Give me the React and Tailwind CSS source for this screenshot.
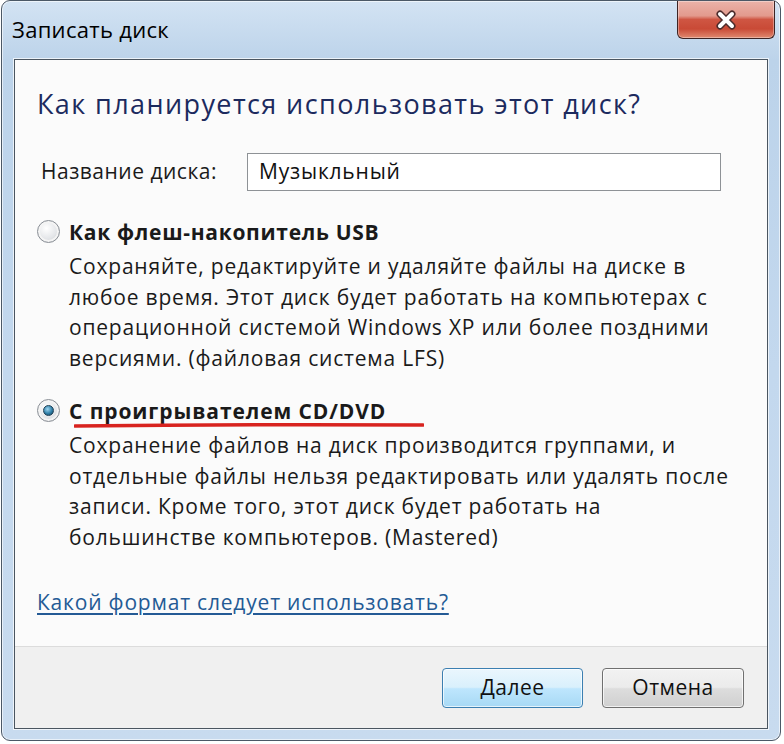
import React from "react";

const font = { fontFamily: '"Open Sans", "Noto Sans", sans-serif' };

function Radio({ checked }) {
  return (
    <span className="relative mt-[3px] flex h-[23px] w-[23px] shrink-0 items-center justify-center rounded-full border border-[#8a8f96] bg-[radial-gradient(circle_at_40%_35%,#ffffff,#e4e6e9_55%,#c4c7cc)] shadow-[inset_0_0_0_2px_#f4f4f4]">
      {checked && (
        <span className="h-[11px] w-[11px] rounded-full border border-[#1e3f55] bg-[radial-gradient(circle_at_40%_35%,#9fd6f0,#2f7fa8_55%,#123a52)]" />
      )}
    </span>
  );
}

function CloseButton() {
  return (
    <div className="absolute right-[5px] top-0 flex h-[38px] w-[98px] items-center justify-center rounded-b-[6px] border border-t-0 border-[#3d2424] bg-[linear-gradient(180deg,#eab3a9_0%,#e39a8d_40%,#cf5643_50%,#c94a36_75%,#e08a70_100%)] shadow-[inset_0_0_0_1px_rgba(255,255,255,0.35)]">
      <svg width="22" height="20" viewBox="0 0 22 20">
        <path d="M5 4 L17 16 M17 4 L5 16" stroke="#4b2b2b" strokeWidth="7" strokeLinecap="round" />
        <path d="M5 4 L17 16 M17 4 L5 16" stroke="#ffffff" strokeWidth="4" strokeLinecap="round" />
      </svg>
    </div>
  );
}

export default function App() {
  return (
    <div className="h-[744px] w-[784px] overflow-hidden bg-white" style={font}>
      <div className="relative ml-[1px] h-[741px] w-[780px] rounded-[9px] border border-[#4b5866] bg-[linear-gradient(180deg,#d3e3f3_0%,#bcd3ea_8%,#c3d8ee_50%,#c8dbef_100%)] px-[12px] pb-[12px] shadow-[inset_0_0_0_1px_rgba(255,255,255,0.6)]">
        <div className="flex h-[58px] items-center text-[22px] tracking-[0.3px] text-black">
          <span className="ml-[-2px] mb-[2px]">Записать диск</span>
        </div>
        <CloseButton />

        <div className="flex h-[670px] flex-col border border-[#4a5560] bg-[#f0f0f0] shadow-[0_0_0_1px_rgba(255,255,255,0.7)]">
          <div className="flex flex-1 flex-col bg-[#fbfbfb] pl-[22px] pt-[27px]">
            <h1 className="text-[27px] leading-[34px] tracking-[1.4px] text-[#1c2a5e]">
              Как планируется использовать этот диск?
            </h1>

            <div className="mt-[32px] flex items-center text-[21px]">
              <span className="ml-[4px] w-[206px] tracking-[0.5px] text-[#1a1a1a]">Название диска:</span>
              <div className="flex h-[38px] w-[474px] items-center border border-[#8e9296] bg-white px-[11px] tracking-[0.8px] text-[#111]">
                Музыкльный
              </div>
            </div>

            <div className="mt-[26px] flex gap-[9px]">
              <Radio />
              <div className="text-[21px] text-[#1a1a1a]">
                <div className="font-bold leading-[30px] tracking-[0.7px]">Как флеш-накопитель USB</div>
                <p className="mt-[4px] leading-[30.5px] tracking-[0.8px]">
                  Сохраняйте, редактируйте и удаляйте файлы на диске в
                  <br />
                  любое время. Этот диск будет работать на компьютерах с
                  <br />
                  операционной системой Windows XP или более поздними
                  <br />
                  версиями. (файловая система LFS)
                </p>
              </div>
            </div>

            <div className="mt-[23px] flex gap-[9px]">
              <Radio checked />
              <div className="text-[21px] text-[#1a1a1a]">
                <div className="relative font-bold leading-[30px] tracking-[0.9px]">
                  С проигрывателем CD/DVD
                  <svg className="absolute left-[5px] top-[26px]" width="350" height="8" viewBox="0 0 350 8">
                    <path d="M1 4 Q 170 2 349 3" stroke="#d8231f" strokeWidth="3.5" fill="none" strokeLinecap="round" />
                  </svg>
                </div>
                <p className="mt-[4px] leading-[30.5px] tracking-[0.8px]">
                  Сохранение файлов на диск производится группами, и
                  <br />
                  отдельные файлы нельзя редактировать или удалять после
                  <br />
                  записи. Кроме того, этот диск будет работать на
                  <br />
                  большинстве компьютеров. (Mastered)
                </p>
              </div>
            </div>

            <a className="mt-[35px] self-start text-[21px] leading-[30px] tracking-[0.8px] text-[#245a95] underline underline-offset-[3px]">
              Какой формат следует использовать?
            </a>
          </div>

          <div className="flex h-[82px] items-center justify-end gap-[19px] border-t border-[#dcdcdc] pr-[23px] text-[21px] tracking-[0.5px]">
            <button className="h-[40px] w-[141px] rounded-[4px] border border-[#3c7fb1] bg-[linear-gradient(180deg,#eaf6fd_0%,#d9f0fc_48%,#bee6fd_52%,#a7d9f5_100%)] text-[#111] shadow-[inset_0_0_0_1px_rgba(255,255,255,0.7)]">
              Далее
            </button>
            <button className="h-[40px] w-[142px] rounded-[4px] border border-[#707070] bg-[linear-gradient(180deg,#f2f2f2_0%,#ebebeb_48%,#dddddd_52%,#cfcfcf_100%)] text-[#111] shadow-[inset_0_0_0_1px_rgba(255,255,255,0.7)]">
              Отмена
            </button>
          </div>
        </div>
      </div>
    </div>
  );
}
